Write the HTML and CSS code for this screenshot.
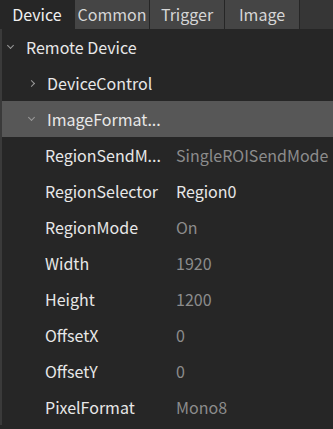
FILE: index.html
```html
<!DOCTYPE html>
<html>
  <head>
    <title>Device Properties</title>
    <meta name="viewport" content="width=device-width, initial-scale=1.0" />
    <link rel="stylesheet" href="styles.css">
  </head>

  <body>
    <div class="panel">
      <div class="tabs">
        <div class="tab active">Device</div>
        <div class="tab">Common</div>
        <div class="tab">Trigger</div>
        <div class="tab">Image</div>
        <div class="tab-fill"></div>
      </div>
      <div class="tree">
        <div class="row level-0">
          <span class="arrow open"></span>
          <span class="name">Remote Device</span>
        </div>
        <div class="row level-1">
          <span class="arrow closed"></span>
          <span class="name">DeviceControl</span>
        </div>
        <div class="row level-1 selected">
          <span class="arrow open"></span>
          <span class="name">ImageFormat...</span>
        </div>
        <div class="row prop">
          <span class="key">RegionSendM...</span>
          <span class="value muted">SingleROISendMode</span>
        </div>
        <div class="row prop">
          <span class="key">RegionSelector</span>
          <span class="value">Region0</span>
        </div>
        <div class="row prop">
          <span class="key">RegionMode</span>
          <span class="value muted">On</span>
        </div>
        <div class="row prop">
          <span class="key">Width</span>
          <span class="value muted">1920</span>
        </div>
        <div class="row prop">
          <span class="key">Height</span>
          <span class="value muted">1200</span>
        </div>
        <div class="row prop">
          <span class="key">OffsetX</span>
          <span class="value muted">0</span>
        </div>
        <div class="row prop">
          <span class="key">OffsetY</span>
          <span class="value muted">0</span>
        </div>
        <div class="row prop">
          <span class="key">PixelFormat</span>
          <span class="value muted">Mono8</span>
        </div>
      </div>
    </div>
  </body>
</html>
```

FILE: styles.css
```css
* {
  box-sizing: border-box;
}
html,
body {
  margin: 0;
  height: 100%;
  background: #262626;
}
body {
  font-family: "Noto Sans CJK SC", "Noto Sans", sans-serif;
  font-size: 16px;
  color: #e8e8e8;
}
.panel {
  height: 100%;
  overflow: hidden;
}
.tabs {
  display: flex;
  height: 29px;
  background: #363636;
}
.tab {
  width: 75px;
  line-height: 29px;
  text-align: center;
  background: #454545;
  color: #d6d6d6;
  border-right: 1px solid #262626;
}
.tab.active {
  background: #262626;
  color: #f0f0f0;
}
.tab-fill {
  flex: 1;
}
.tree {
  border-left: 2px solid #3a3a3a;
}
.row {
  display: flex;
  align-items: center;
  height: 36px;
  white-space: nowrap;
}
.level-0 {
  padding-left: 6px;
}
.level-1 {
  padding-left: 27px;
}
.selected {
  background: #575757;
}
.arrow {
  width: 5px;
  height: 5px;
  margin-right: 13px;
  border-right: 1px solid #9a9a9a;
  border-bottom: 1px solid #9a9a9a;
}
.arrow.open {
  transform: translateY(-2px) rotate(45deg);
}
.arrow.closed {
  transform: rotate(-45deg);
}
.prop {
  padding-left: 43px;
}
.key {
  width: 131px;
}
.value {
  color: #e8e8e8;
}
.value.muted {
  color: #8c8c8c;
}
```
